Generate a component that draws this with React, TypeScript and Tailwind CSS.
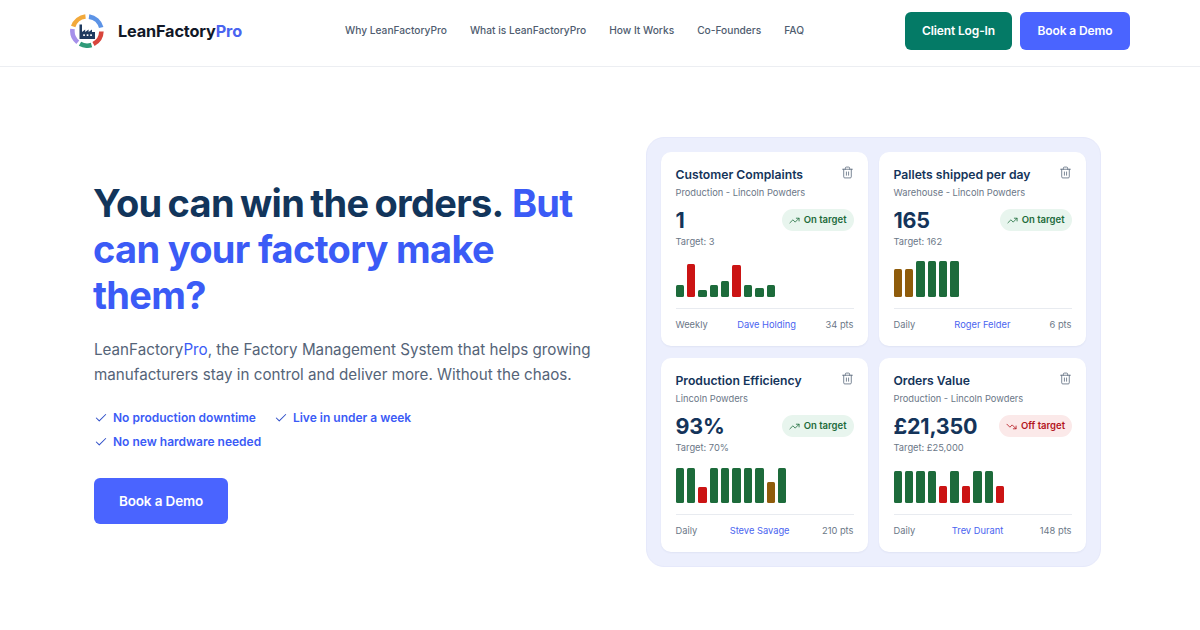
import { Check, Trash2, TrendingUp, TrendingDown } from "lucide-react";

const G = "bg-[#1d6b3b]";
const R = "bg-[#cb1414]";
const B = "bg-[#8f5c0b]";

type CardData = {
  title: string;
  sub: string;
  value: string;
  target: string;
  off?: boolean;
  bars: [number, string][];
  period: string;
  owner: string;
  pts: string;
};

const cards: CardData[] = [
  {
    title: "Customer Complaints",
    sub: "Production - Lincoln Powders",
    value: "1",
    target: "Target: 3",
    bars: [[12, G], [33, R], [7, G], [12, G], [16, G], [32, R], [12, G], [9, G], [12, G]],
    period: "Weekly",
    owner: "Dave Holding",
    pts: "34 pts",
  },
  {
    title: "Pallets shipped per day",
    sub: "Warehouse - Lincoln Powders",
    value: "165",
    target: "Target: 162",
    bars: [[28, B], [28, B], [36, G], [36, G], [36, G], [36, G]],
    period: "Daily",
    owner: "Roger Felder",
    pts: "6 pts",
  },
  {
    title: "Production Efficiency",
    sub: "Lincoln Powders",
    value: "93%",
    target: "Target: 70%",
    bars: [[35, G], [35, G], [16, R], [35, G], [35, G], [35, G], [35, G], [35, G], [21, B], [35, G]],
    period: "Daily",
    owner: "Steve Savage",
    pts: "210 pts",
  },
  {
    title: "Orders Value",
    sub: "Production - Lincoln Powders",
    value: "£21,350",
    target: "Target: £25,000",
    off: true,
    bars: [[32, G], [32, G], [32, G], [32, G], [17, R], [32, G], [17, R], [32, G], [32, G], [17, R]],
    period: "Daily",
    owner: "Trev Durant",
    pts: "148 pts",
  },
];

function Logo() {
  return (
    <svg width="34" height="34" viewBox="0 0 34 34" fill="none" className="shrink-0">
      <g strokeWidth="4.6" fill="none">
        <path d="M3.2 12.5 A14.6 14.6 0 0 1 15.5 2.5" stroke="#f2a93b" />
        <path d="M19 2.6 A14.6 14.6 0 0 1 31.2 13.5" stroke="#5c93e6" />
        <path d="M31.4 17.5 A14.6 14.6 0 0 1 23.5 30" stroke="#d8453c" />
        <path d="M21.5 31 A14.6 14.6 0 0 1 10 29.8" stroke="#2f9a78" />
        <path d="M7.8 28.2 A14.6 14.6 0 0 1 2.5 15" stroke="#a590ea" />
      </g>
      <path
        d="M9.5 25 V10.5 H12 V18 L15.2 15.5 V18 L18.6 15.5 V18 L22 15.5 V18 L25 18 V25 Z"
        fill="#1f3a5f"
      />
      <rect x="13.2" y="20.3" width="1.7" height="1.7" fill="#fff" />
      <rect x="16.7" y="20.3" width="1.7" height="1.7" fill="#fff" />
      <rect x="20.2" y="20.3" width="1.7" height="1.7" fill="#fff" />
    </svg>
  );
}

function KpiCard({ c }: { c: CardData }) {
  return (
    <div className="flex h-[194px] w-[207px] flex-col rounded-[10px] bg-white px-[14.5px] pt-[15px] shadow-[0_1px_2px_rgba(30,50,100,0.06)]">
      <div className="flex h-4 items-start justify-between">
        <span className="text-[12.2px] leading-4 font-semibold text-[#14345a]">{c.title}</span>
        <Trash2 size={13} strokeWidth={1.5} className="mt-[-1px] mr-[-0.5px] text-[#5d6b7e]" />
      </div>
      <div className="mt-[3px] text-[9.3px] leading-[13px] text-[#6b7787]">{c.sub}</div>
      <div className="mt-[10px] flex h-[22px] items-center justify-between">
        <span className="text-[21.5px] leading-[22px] font-bold tracking-[-0.01em] text-[#14345a]">{c.value}</span>
        <span
          className={
            c.off
              ? "flex h-[22px] items-center gap-[4px] rounded-full bg-[#fbe9e9] px-[6.5px] text-[9.5px] font-semibold text-[#b3141c]"
              : "flex h-[22px] items-center gap-[4px] rounded-full bg-[#e8f5ee] px-[7px] text-[9.5px] font-semibold text-[#1d6b3b]"
          }
        >
          {c.off ? <TrendingDown size={11} strokeWidth={1.75} /> : <TrendingUp size={11} strokeWidth={1.75} />}
          {c.off ? "Off target" : "On target"}
        </span>
      </div>
      <div className="mt-[4px] text-[9.3px] leading-[13px] text-[#6b7787]">{c.target}</div>
      <div className="mt-[13px] flex h-[36px] items-end gap-[3px]">
        {c.bars.map(([h, color], i) => (
          <div key={i} className={`w-[8.4px] rounded-[1.5px] ${color}`} style={{ height: h }} />
        ))}
      </div>
      <div className="mt-[11px] flex h-[33px] items-center justify-between border-t border-[#e8ebf0] text-[9.3px] text-[#6b7787]">
        <span>{c.period}</span>
        <span className="text-[#4a64f0]">{c.owner}</span>
        <span>{c.pts}</span>
      </div>
    </div>
  );
}

function Tick({ children }: { children: string }) {
  return (
    <span className="flex items-center gap-[5px] text-[12px] leading-[24px] font-semibold text-[#3b5bf6]">
      <Check size={14} strokeWidth={1.75} className="text-[#2f4fc8]" />
      {children}
    </span>
  );
}

export default function App() {
  return (
    <div className="min-h-[630px] bg-white font-['Inter',sans-serif]">
      <header className="flex h-[67px] items-center justify-between border-b border-[#eceef2] px-[70px] pb-[4px]">
        <div className="flex items-center gap-[14px]">
          <Logo />
          <span className="text-[16.3px] font-bold tracking-[-0.01em] text-[#111827]">
            LeanFactory<span className="text-[#4a64f0]">Pro</span>
          </span>
        </div>
        <nav className="ml-[2px] flex items-center gap-[23px] text-[10.2px] font-medium text-[#4f5d70]">
          <span>Why LeanFactoryPro</span>
          <span>What is LeanFactoryPro</span>
          <span>How It Works</span>
          <span>Co-Founders</span>
          <span>FAQ</span>
        </nav>
        <div className="flex items-center gap-2">
          <span className="flex h-[38px] w-[107px] items-center justify-center rounded-[6px] bg-[#047a66] text-[12px] font-semibold tracking-[-0.01em] text-white">
            Client Log-In
          </span>
          <span className="flex h-[38px] w-[110px] items-center justify-center rounded-[6px] bg-[#4a64ff] text-[12px] font-semibold tracking-[-0.01em] text-white">
            Book a Demo
          </span>
        </div>
      </header>

      <main className="flex items-center justify-between pt-[70px] pr-[99px] pl-[94px]">
        <div className="w-[510px]">
          <h1 className="-ml-[1px] text-[38px] leading-[46px] font-bold tracking-[-0.018em] text-[#12355b]">
            <span className="[word-spacing:-2.3px]">You can win the orders.</span>{" "}
            <span className="text-[#3b5bf6]">But can your factory make them?</span>
          </h1>
          <p className="mt-[19px] text-[15.2px] leading-[25px] text-[#556478]">
            LeanFactory<span className="text-[#3b5bf6]">Pro</span>, the Factory Management System that helps growing
            manufacturers stay in control and deliver more. Without the chaos.
          </p>
          <div className="mt-[19px] flex w-[340px] flex-wrap gap-x-[18px]">
            <Tick>No production downtime</Tick>
            <Tick>Live in under a week</Tick>
            <Tick>No new hardware needed</Tick>
          </div>
          <span className="mt-[24px] flex h-[46px] w-[134px] items-center justify-center rounded-[6px] bg-[#4a64ff] text-[13.5px] font-semibold tracking-[-0.01em] text-white">
            Book a Demo
          </span>
        </div>
        <div className="grid w-[455px] grid-cols-2 gap-x-[11px] gap-y-[12px] rounded-[18px] border border-[#e6e9fb] bg-[#eceffd] p-[14px]">
          {cards.map((c) => (
            <KpiCard key={c.title} c={c} />
          ))}
        </div>
      </main>
    </div>
  );
}
